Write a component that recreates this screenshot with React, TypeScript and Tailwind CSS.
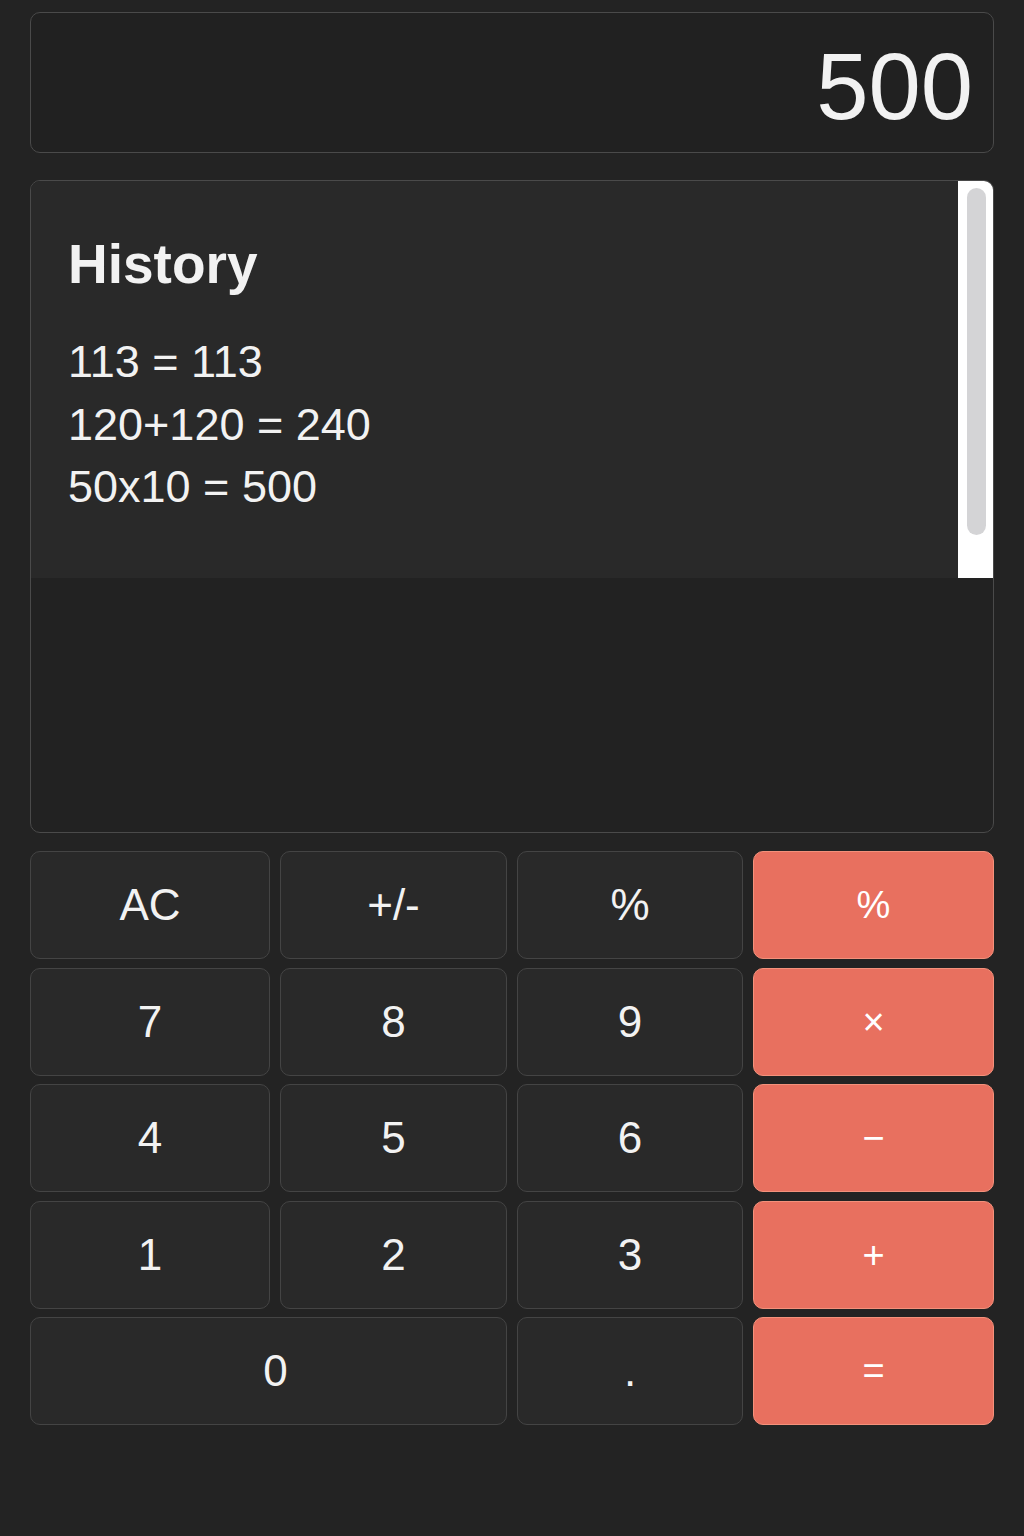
import React from "react"

const history = ["113 = 113", "120+120 = 240", "50x10 = 500"]

type Key = { label: string; op?: boolean; wide?: boolean }

const keys: Key[] = [
  { label: "AC" },
  { label: "+/-" },
  { label: "%" },
  { label: "%", op: true },
  { label: "7" },
  { label: "8" },
  { label: "9" },
  { label: "×", op: true },
  { label: "4" },
  { label: "5" },
  { label: "6" },
  { label: "−", op: true },
  { label: "1" },
  { label: "2" },
  { label: "3" },
  { label: "+", op: true },
  { label: "0", wide: true },
  { label: "." },
  { label: "=", op: true },
]

export default function App() {
  return (
    <div className="min-h-screen bg-[#232323] px-[30px] pt-[12px] font-['Liberation_Sans',Arial,sans-serif] text-[#f2f2f2]">
      {/* display */}
      <div className="flex h-[141px] items-center justify-end rounded-[10px] border border-[#4a4a4a] bg-[#212121] pr-[20px] pt-[8px]">
        <span className="text-[94px] leading-none">500</span>
      </div>

      {/* history */}
      <div className="mt-[27px] h-[653px] overflow-hidden rounded-[10px] border border-[#4a4a4a] bg-[#222222]">
        <div className="flex h-[397px] bg-[#292929]">
          <div className="flex-1 pl-[37px] pt-[56px]">
            <h2 className="text-[55px] font-bold leading-none">History</h2>
            <ul className="mt-[39px] text-[45px] leading-[62.5px]">
              {history.map((h) => (
                <li key={h}>{h}</li>
              ))}
            </ul>
          </div>
          <div className="w-[35px] bg-white pl-[9px] pt-[7px]">
            <div className="h-[347px] w-[19px] rounded-full bg-[#d4d4d6]" />
          </div>
        </div>
      </div>

      {/* keypad */}
      <div className="mt-[18px] grid grid-cols-[240px_227px_226px_241px] gap-x-[10px] gap-y-[8.5px]">
        {keys.map((k, i) => (
          <button
            key={i}
            className={
              "flex h-[108px] items-center justify-center rounded-[10px] border leading-none " +
              (k.wide ? "col-span-2 pl-[14px] " : "") +
              (k.op
                ? "border-[#f4917b] bg-[#e8705f] text-[38px] text-white"
                : "border-[#444444] bg-[#292929] text-[44px] text-[#f2f2f2]")
            }
          >
            {k.label}
          </button>
        ))}
      </div>
    </div>
  )
}
